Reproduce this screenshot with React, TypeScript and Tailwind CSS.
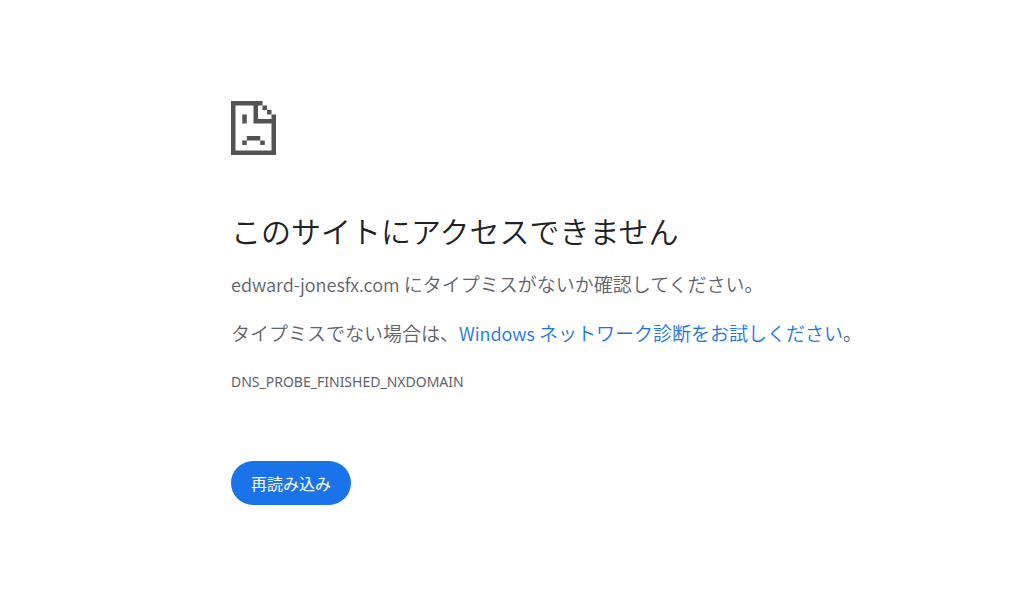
import React from 'react';

const host = "edward-jonesfx.com";
const errorCode = "DNS_PROBE_FINISHED_NXDOMAIN";

// Pixel-art page with a folded corner and a sad face, one unit per block
function SadPageIcon() {
  return (
    <svg
      viewBox="0 0 10 12"
      className="block w-[45px] h-[54px]"
      fill="#535353"
      aria-hidden="true"
    >
      <path d="M0 0h7v1H6v3h3V3h1v9H0zM1 1v10h8V5H5V1z" fillRule="evenodd" />
      <path d="M7 1h1v1H7zM8 2h1v1H8z" />
      <path d="M2.5 3h1v2h-1zM3.5 7.8h3v1h-3zM2.5 8.8h1v1h-1zM6.5 8.8h1v1h-1z" />
    </svg>
  );
}

export default function App() {
  return (
    <main className="min-h-screen bg-white pl-[231px] pr-8 pt-[101px] font-[350] text-[#5f6368] font-['Noto_Sans_CJK_JP',sans-serif]">
      <SadPageIcon />

      <h1 className="mt-[52px] text-[30px] leading-[46px] font-[350] text-[#202124]">
        このサイトにアクセスできません
      </h1>

      <div className="mt-4 space-y-5 text-[19px] leading-[29px]">
        <p>
          <span className="text-lg leading-none">{host} </span>
          にタイプミスがないか確認してください。
        </p>
        <p>
          タイプミスでない場合は、
          <a href="#diagnose" className="text-[#1a73e8]">
            <span className="text-lg leading-none">Windows </span>
            ネットワーク診断をお試しください
          </a>
          。
        </p>
      </div>

      <p className="mt-[23px] text-sm leading-6 font-normal font-['Noto_Sans',sans-serif]">{errorCode}</p>

      <button
        type="button"
        onClick={() => window.location.reload()}
        className="mt-[67px] h-11 rounded-full bg-[#1a73e8] px-5 text-base font-normal text-white"
      >
        再読み込み
      </button>
    </main>
  );
}
